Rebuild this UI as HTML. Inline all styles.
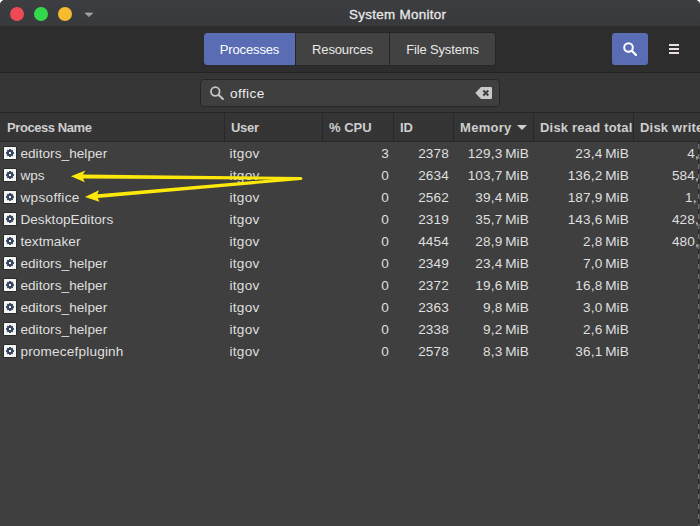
<!DOCTYPE html>
<html>
<head>
<meta charset="utf-8">
<title>System Monitor</title>
<style>
html,body{margin:0;padding:0;}
body{width:700px;height:526px;overflow:hidden;background:#fff;font-family:"Liberation Sans","DejaVu Sans",sans-serif;font-size:13.4px;color:#dfdfdf;position:relative;}
#win{position:absolute;left:0;top:0;width:700px;height:526px;background:#3f3f3f;border-radius:5px 5px 0 0;overflow:hidden;}
#title{position:absolute;left:0;top:0;width:700px;height:26px;background:linear-gradient(#3d3e42,#38393c);}
#title .t{position:absolute;left:349px;top:7px;font-size:13.4px;color:#e8e8e8;white-space:nowrap;letter-spacing:0.3px;-webkit-text-stroke:0.3px #e8e8e8;}
.dot{position:absolute;width:14px;height:14px;border-radius:50%;top:7px;}
#hb{position:absolute;left:0;top:26px;width:700px;height:46px;background:#2d2d2d;border-bottom:1px solid #232323;}
.tab{position:absolute;top:6px;height:34px;box-sizing:border-box;background:#424242;border:1px solid #262626;color:#e9e9e9;text-align:center;line-height:33px;font-size:13px;letter-spacing:-0.15px;}
#sb{position:absolute;left:0;top:73px;width:700px;height:39px;background:#363636;border-bottom:1px solid #262626;}
#entry{position:absolute;left:200px;top:6px;width:300px;height:28px;box-sizing:border-box;background:#3f3f3f;border:1px solid #262626;border-radius:4px;}
#entry span{position:absolute;left:29px;top:6px;font-size:13.6px;color:#ececec;letter-spacing:0.4px;}
#th{position:absolute;left:0;top:113px;width:700px;height:28px;background:#353535;border-bottom:1px solid #282828;overflow:hidden;}
.h{position:absolute;top:1px;height:28px;line-height:28px;font-weight:bold;font-size:13px;color:#cecece;white-space:nowrap;}
.s{position:absolute;top:0;width:1px;height:28px;background:#282828;}
.r{position:absolute;left:0;width:698px;height:22px;line-height:24px;white-space:nowrap;font-size:13.6px;letter-spacing:0.15px;word-spacing:-1.2px;}
.r span{position:absolute;top:0;}
.ic{position:absolute;left:3px;top:4px;width:14px;height:14px;}
.n{left:20.4px;letter-spacing:0.05px;}
.u{left:229.4px;letter-spacing:0.3px;}
.c{right:309px;}
.i{right:249px;}
.m{right:169px;}
.d{right:69px;}
.w{right:-33px;}
</style>
</head>
<body>
<div id="win">
  <div id="title">
    <div class="dot" style="left:10px;background:#ee4a55;"></div>
    <div class="dot" style="left:34px;background:#34d84c;"></div>
    <div class="dot" style="left:58px;background:#f8bb30;"></div>
    <svg style="position:absolute;left:84px;top:12px" width="10" height="6" viewBox="0 0 10 6"><defs><linearGradient id="tg" x1="0" y1="0" x2="0" y2="1"><stop offset="0" stop-color="#b4b4b4"/><stop offset="1" stop-color="#7c7c7c"/></linearGradient></defs><path d="M0.5 0.8h8.800L4.900 5.200z" fill="url(#tg)"/></svg>
    <div class="t">System Monitor</div>
  </div>
  <div id="hb">
    <div class="tab" style="left:204px;width:91px;top:7px;height:32px;line-height:31px;background:#5a6db4;border-color:#5a6db4;border-radius:3px 0 0 3px;color:#fff;">Processes</div>
    <div class="tab" style="left:295px;width:95px;">Resources</div>
    <div class="tab" style="left:390px;width:106px;border-left:none;border-radius:0 3px 3px 0;">File Systems</div>
    <div style="position:absolute;left:612px;top:7px;width:36px;height:32px;background:#5a6db4;border-radius:3px;">
      <svg style="position:absolute;left:10px;top:8px" width="16" height="16" viewBox="0 0 16 16"><circle cx="6.5" cy="6.5" r="4.3" fill="none" stroke="#fff" stroke-width="2"/><path d="M9.8 9.8L14 14" stroke="#fff" stroke-width="2.2" stroke-linecap="round"/></svg>
    </div>
    <div style="position:absolute;left:669px;top:18px;width:10px;height:2px;background:#e9e1e1;box-shadow:0 4px 0 #e9e1e1,0 8px 0 #e9e1e1;"></div>
  </div>
  <div id="sb">
    <div id="entry">
      <svg style="position:absolute;left:8px;top:6px" width="16" height="16" viewBox="0 0 16 16"><circle cx="6.3" cy="5.5" r="4.3" fill="none" stroke="#c4c4c4" stroke-width="1.8"/><path d="M9.700 8.900L13.900 13" stroke="#c4c4c4" stroke-width="2.1" stroke-linecap="round"/></svg>
      <span>office</span>
      <svg style="position:absolute;left:273.5px;top:7px" width="17" height="12" viewBox="0 0 17 12"><path d="M6 0h10a1 1 0 0 1 1 1v10a1 1 0 0 1-1 1H6L0.300 6z" fill="#c9c9c9"/><path d="M8.300 3.500l5 5M13.300 3.500l-5 5" stroke="#3f3f3f" stroke-width="2"/></svg>
    </div>
  </div>
  <div id="th">
    <span class="h" style="left:7px;letter-spacing:-0.42px;">Process Name</span>
    <span class="h" style="left:231px;letter-spacing:-0.3px;">User</span>
    <span class="h" style="left:329px;">% CPU</span>
    <span class="h" style="left:400px;">ID</span>
    <span class="h" style="left:460px;letter-spacing:0.3px;">Memory</span>
    <svg style="position:absolute;left:517px;top:12px" width="10" height="5" viewBox="0 0 10 5"><path d="M0 0h10L5 5z" fill="#cfcfcf"/></svg>
    <span class="h" style="left:540px;letter-spacing:0.2px;">Disk read total</span>
    <span class="h" style="left:640px;letter-spacing:0.2px;">Disk write total</span>
    <i class="s" style="left:224px"></i><i class="s" style="left:322px"></i><i class="s" style="left:393px"></i><i class="s" style="left:453px"></i><i class="s" style="left:533px"></i><i class="s" style="left:633px"></i>
  </div>
  <div id="rows" style="position:absolute;left:0;top:142px;width:698px;height:384px;overflow:hidden;">
<!--ROWS-->
    <div class="r" style="top:0px"><svg class="ic" viewBox="0 0 14 14"><rect x="0.25" y="0.25" width="13.5" height="13.5" rx="1.6" fill="#262626"/><rect x="1" y="1" width="12" height="12" rx="0.6" fill="#f6f6f6"/><g fill="#33455e"><circle cx="7" cy="7" r="2.9"/><rect x="6.1" y="3" width="1.8" height="8"/><rect x="3" y="6.1" width="8" height="1.8"/><rect x="6.1" y="3.1" width="1.8" height="7.8" transform="rotate(45 7 7)"/><rect x="6.1" y="3.1" width="1.8" height="7.8" transform="rotate(-45 7 7)"/></g><rect x="6" y="6" width="2" height="2" rx="0.3" fill="#f6f6f6"/></svg><span class="n">editors_helper</span><span class="u">itgov</span><span class="c">3</span><span class="i">2378</span><span class="m">129,3 MiB</span><span class="d">23,4 MiB</span><span class="w">4,0 KiB</span></div>
    <div class="r" style="top:22px"><svg class="ic" viewBox="0 0 14 14"><rect x="0.25" y="0.25" width="13.5" height="13.5" rx="1.6" fill="#262626"/><rect x="1" y="1" width="12" height="12" rx="0.6" fill="#f6f6f6"/><g fill="#33455e"><circle cx="7" cy="7" r="2.9"/><rect x="6.1" y="3" width="1.8" height="8"/><rect x="3" y="6.1" width="8" height="1.8"/><rect x="6.1" y="3.1" width="1.8" height="7.8" transform="rotate(45 7 7)"/><rect x="6.1" y="3.1" width="1.8" height="7.8" transform="rotate(-45 7 7)"/></g><rect x="6" y="6" width="2" height="2" rx="0.3" fill="#f6f6f6"/></svg><span class="n">wps</span><span class="u">itgov</span><span class="c">0</span><span class="i">2634</span><span class="m">103,7 MiB</span><span class="d">136,2 MiB</span><span class="w">584,0 KiB</span></div>
    <div class="r" style="top:44px"><svg class="ic" viewBox="0 0 14 14"><rect x="0.25" y="0.25" width="13.5" height="13.5" rx="1.6" fill="#262626"/><rect x="1" y="1" width="12" height="12" rx="0.6" fill="#f6f6f6"/><g fill="#33455e"><circle cx="7" cy="7" r="2.9"/><rect x="6.1" y="3" width="1.8" height="8"/><rect x="3" y="6.1" width="8" height="1.8"/><rect x="6.1" y="3.1" width="1.8" height="7.8" transform="rotate(45 7 7)"/><rect x="6.1" y="3.1" width="1.8" height="7.8" transform="rotate(-45 7 7)"/></g><rect x="6" y="6" width="2" height="2" rx="0.3" fill="#f6f6f6"/></svg><span class="n" style="letter-spacing:0.32px">wpsoffice</span><span class="u">itgov</span><span class="c">0</span><span class="i">2562</span><span class="m">39,4 MiB</span><span class="d">187,9 MiB</span><span class="w">1,1 MiB</span></div>
    <div class="r" style="top:66px"><svg class="ic" viewBox="0 0 14 14"><rect x="0.25" y="0.25" width="13.5" height="13.5" rx="1.6" fill="#262626"/><rect x="1" y="1" width="12" height="12" rx="0.6" fill="#f6f6f6"/><g fill="#33455e"><circle cx="7" cy="7" r="2.9"/><rect x="6.1" y="3" width="1.8" height="8"/><rect x="3" y="6.1" width="8" height="1.8"/><rect x="6.1" y="3.1" width="1.8" height="7.8" transform="rotate(45 7 7)"/><rect x="6.1" y="3.1" width="1.8" height="7.8" transform="rotate(-45 7 7)"/></g><rect x="6" y="6" width="2" height="2" rx="0.3" fill="#f6f6f6"/></svg><span class="n">DesktopEditors</span><span class="u">itgov</span><span class="c">0</span><span class="i">2319</span><span class="m">35,7 MiB</span><span class="d">143,6 MiB</span><span class="w">428,0 KiB</span></div>
    <div class="r" style="top:88px"><svg class="ic" viewBox="0 0 14 14"><rect x="0.25" y="0.25" width="13.5" height="13.5" rx="1.6" fill="#262626"/><rect x="1" y="1" width="12" height="12" rx="0.6" fill="#f6f6f6"/><g fill="#33455e"><circle cx="7" cy="7" r="2.9"/><rect x="6.1" y="3" width="1.8" height="8"/><rect x="3" y="6.1" width="8" height="1.8"/><rect x="6.1" y="3.1" width="1.8" height="7.8" transform="rotate(45 7 7)"/><rect x="6.1" y="3.1" width="1.8" height="7.8" transform="rotate(-45 7 7)"/></g><rect x="6" y="6" width="2" height="2" rx="0.3" fill="#f6f6f6"/></svg><span class="n">textmaker</span><span class="u">itgov</span><span class="c">0</span><span class="i">4454</span><span class="m">28,9 MiB</span><span class="d">2,8 MiB</span><span class="w">480,0 KiB</span></div>
    <div class="r" style="top:110px"><svg class="ic" viewBox="0 0 14 14"><rect x="0.25" y="0.25" width="13.5" height="13.5" rx="1.6" fill="#262626"/><rect x="1" y="1" width="12" height="12" rx="0.6" fill="#f6f6f6"/><g fill="#33455e"><circle cx="7" cy="7" r="2.9"/><rect x="6.1" y="3" width="1.8" height="8"/><rect x="3" y="6.1" width="8" height="1.8"/><rect x="6.1" y="3.1" width="1.8" height="7.8" transform="rotate(45 7 7)"/><rect x="6.1" y="3.1" width="1.8" height="7.8" transform="rotate(-45 7 7)"/></g><rect x="6" y="6" width="2" height="2" rx="0.3" fill="#f6f6f6"/></svg><span class="n">editors_helper</span><span class="u">itgov</span><span class="c">0</span><span class="i">2349</span><span class="m">23,4 MiB</span><span class="d">7,0 MiB</span></div>
    <div class="r" style="top:132px"><svg class="ic" viewBox="0 0 14 14"><rect x="0.25" y="0.25" width="13.5" height="13.5" rx="1.6" fill="#262626"/><rect x="1" y="1" width="12" height="12" rx="0.6" fill="#f6f6f6"/><g fill="#33455e"><circle cx="7" cy="7" r="2.9"/><rect x="6.1" y="3" width="1.8" height="8"/><rect x="3" y="6.1" width="8" height="1.8"/><rect x="6.1" y="3.1" width="1.8" height="7.8" transform="rotate(45 7 7)"/><rect x="6.1" y="3.1" width="1.8" height="7.8" transform="rotate(-45 7 7)"/></g><rect x="6" y="6" width="2" height="2" rx="0.3" fill="#f6f6f6"/></svg><span class="n">editors_helper</span><span class="u">itgov</span><span class="c">0</span><span class="i">2372</span><span class="m">19,6 MiB</span><span class="d">16,8 MiB</span></div>
    <div class="r" style="top:154px"><svg class="ic" viewBox="0 0 14 14"><rect x="0.25" y="0.25" width="13.5" height="13.5" rx="1.6" fill="#262626"/><rect x="1" y="1" width="12" height="12" rx="0.6" fill="#f6f6f6"/><g fill="#33455e"><circle cx="7" cy="7" r="2.9"/><rect x="6.1" y="3" width="1.8" height="8"/><rect x="3" y="6.1" width="8" height="1.8"/><rect x="6.1" y="3.1" width="1.8" height="7.8" transform="rotate(45 7 7)"/><rect x="6.1" y="3.1" width="1.8" height="7.8" transform="rotate(-45 7 7)"/></g><rect x="6" y="6" width="2" height="2" rx="0.3" fill="#f6f6f6"/></svg><span class="n">editors_helper</span><span class="u">itgov</span><span class="c">0</span><span class="i">2363</span><span class="m">9,8 MiB</span><span class="d">3,0 MiB</span></div>
    <div class="r" style="top:176px"><svg class="ic" viewBox="0 0 14 14"><rect x="0.25" y="0.25" width="13.5" height="13.5" rx="1.6" fill="#262626"/><rect x="1" y="1" width="12" height="12" rx="0.6" fill="#f6f6f6"/><g fill="#33455e"><circle cx="7" cy="7" r="2.9"/><rect x="6.1" y="3" width="1.8" height="8"/><rect x="3" y="6.1" width="8" height="1.8"/><rect x="6.1" y="3.1" width="1.8" height="7.8" transform="rotate(45 7 7)"/><rect x="6.1" y="3.1" width="1.8" height="7.8" transform="rotate(-45 7 7)"/></g><rect x="6" y="6" width="2" height="2" rx="0.3" fill="#f6f6f6"/></svg><span class="n">editors_helper</span><span class="u">itgov</span><span class="c">0</span><span class="i">2338</span><span class="m">9,2 MiB</span><span class="d">2,6 MiB</span></div>
    <div class="r" style="top:198px"><svg class="ic" viewBox="0 0 14 14"><rect x="0.25" y="0.25" width="13.5" height="13.5" rx="1.6" fill="#262626"/><rect x="1" y="1" width="12" height="12" rx="0.6" fill="#f6f6f6"/><g fill="#33455e"><circle cx="7" cy="7" r="2.9"/><rect x="6.1" y="3" width="1.8" height="8"/><rect x="3" y="6.1" width="8" height="1.8"/><rect x="6.1" y="3.1" width="1.8" height="7.8" transform="rotate(45 7 7)"/><rect x="6.1" y="3.1" width="1.8" height="7.8" transform="rotate(-45 7 7)"/></g><rect x="6" y="6" width="2" height="2" rx="0.3" fill="#f6f6f6"/></svg><span class="n" style="letter-spacing:0.18px">promecefpluginh</span><span class="u">itgov</span><span class="c">0</span><span class="i">2578</span><span class="m">8,3 MiB</span><span class="d">36,1 MiB</span></div>
<!--/ROWS-->
  </div>
  <div style="position:absolute;left:698px;top:142px;width:1px;height:384px;background:repeating-linear-gradient(to bottom,#2b2b2b 0,#2b2b2b 2px,#6c6c6c 2px,#6c6c6c 7px,#2b2b2b 7px,#2b2b2b 10px);"></div>
  <div style="position:absolute;left:699px;top:142px;width:1px;height:384px;opacity:0.4;background:repeating-linear-gradient(to bottom,#2b2b2b 0,#2b2b2b 2px,#6c6c6c 2px,#6c6c6c 7px,#2b2b2b 7px,#2b2b2b 10px);"></div>
  <svg style="position:absolute;left:0;top:0;pointer-events:none" width="700" height="526" viewBox="0 0 700 526">
    <g fill="#fce80a" stroke="none">
      <path d="M301 176.900L83 174.600L85.400 170.600L70.900 176.300L84.900 182.300L83 178.400L301 179.900z"/>
      <path d="M301 177L97.500 194.300L98.900 190.300L84.900 197.100L99.400 201.700L97.800 198.100L301 179.900z"/>
      <circle cx="300.900" cy="178.400" r="1.500"/>
    </g>
  </svg>
</div>
</body>
</html>
